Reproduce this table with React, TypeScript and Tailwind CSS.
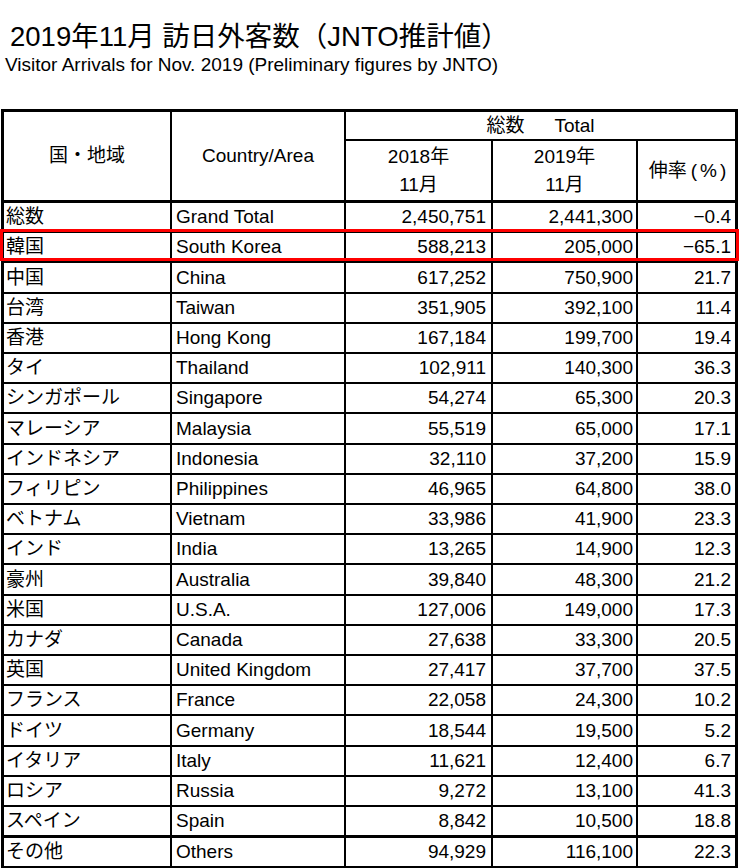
import React from "react";

const rows: [string, string, string, string, string][] = [
  ["総数", "Grand Total", "2,450,751", "2,441,300", "−0.4"],
  ["韓国", "South Korea", "588,213", "205,000", "−65.1"],
  ["中国", "China", "617,252", "750,900", "21.7"],
  ["台湾", "Taiwan", "351,905", "392,100", "11.4"],
  ["香港", "Hong Kong", "167,184", "199,700", "19.4"],
  ["タイ", "Thailand", "102,911", "140,300", "36.3"],
  ["シンガポール", "Singapore", "54,274", "65,300", "20.3"],
  ["マレーシア", "Malaysia", "55,519", "65,000", "17.1"],
  ["インドネシア", "Indonesia", "32,110", "37,200", "15.9"],
  ["フィリピン", "Philippines", "46,965", "64,800", "38.0"],
  ["ベトナム", "Vietnam", "33,986", "41,900", "23.3"],
  ["インド", "India", "13,265", "14,900", "12.3"],
  ["豪州", "Australia", "39,840", "48,300", "21.2"],
  ["米国", "U.S.A.", "127,006", "149,000", "17.3"],
  ["カナダ", "Canada", "27,638", "33,300", "20.5"],
  ["英国", "United Kingdom", "27,417", "37,700", "37.5"],
  ["フランス", "France", "22,058", "24,300", "10.2"],
  ["ドイツ", "Germany", "18,544", "19,500", "5.2"],
  ["イタリア", "Italy", "11,621", "12,400", "6.7"],
  ["ロシア", "Russia", "9,272", "13,100", "41.3"],
  ["スペイン", "Spain", "8,842", "10,500", "18.8"],
  ["その他", "Others", "94,929", "116,100", "22.3"],
];

const font = {
  fontFamily: '"Liberation Sans", "Noto Sans CJK JP", sans-serif',
};

const tallRows = new Set([2, 7, 12, 17]);

export default function App() {
  return (
    <div className="bg-white text-black w-[739px] h-[868px] overflow-hidden" style={font}>
      <div className="pt-[22px] pl-[10px] text-[27.5px] leading-[30px]">
        2019年11月 訪日外客数（JNTO推計値）
      </div>
      <div className="mt-[2px] pl-[5px] text-[19px] leading-[22px]">
        Visitor Arrivals for Nov. 2019 (Preliminary figures by JNTO)
      </div>
      <div className="relative mt-[33px] ml-[1px] w-[737px]">
        <table className="table-fixed border-separate border-spacing-0 w-[737px] border-l-[3px] border-t-[3px] border-black text-[19px] leading-[22px]">
          <colgroup>
            <col className="w-[168px]" />
            <col className="w-[174px]" />
            <col className="w-[147px]" />
            <col className="w-[145px]" />
            <col className="w-[100px]" />
          </colgroup>
          <thead>
            <tr>
              <th rowSpan={2} className="font-normal border-r-2 border-b-[3px] border-black text-center p-0 align-middle">
                国・地域
              </th>
              <th rowSpan={2} className="font-normal border-r-2 border-b-[3px] border-black text-center p-0 align-middle">
                Country/Area
              </th>
              <th colSpan={3} className="h-[29px] font-normal border-r-[3px] border-b-2 border-black text-center p-0 align-middle">
                総数<span className="ml-[30px]">Total</span>
              </th>
            </tr>
            <tr>
              <th className="h-[62px] font-normal border-r-2 border-b-[3px] border-black text-center p-0 align-middle leading-[28px]">
                2018年
                <br />
                11月
              </th>
              <th className="font-normal border-r-2 border-b-[3px] border-black text-center p-0 align-middle leading-[28px]">
                2019年
                <br />
                11月
              </th>
              <th className="font-normal border-r-[3px] border-b-[3px] border-black text-center p-0 pl-[2px] align-middle whitespace-nowrap">
                伸率<span className="ml-[4px]">(</span>
                <span className="mx-[3px]">%</span>)
              </th>
            </tr>
          </thead>
          <tbody>
            {rows.map((r, i) => {
              const thick = i >= rows.length - 2;
              const b = thick ? "border-b-[3px]" : "border-b-2";
              const h = thick ? "h-[31px]" : tallRows.has(i) ? "h-[31px]" : "h-[30px]";
              return (
                <tr key={i}>
                  <td className={`${h} ${b} border-r-2 border-black pl-[2px] p-0 align-middle whitespace-nowrap`}>
                    {r[0]}
                  </td>
                  <td className={`${b} border-r-2 border-black pl-[4px] align-middle whitespace-nowrap`}>
                    {r[1]}
                  </td>
                  <td className={`${b} border-r-2 border-black pr-[5px] text-right align-middle`}>
                    {r[2]}
                  </td>
                  <td className={`${b} border-r-2 border-black pr-[3px] text-right align-middle`}>
                    {r[3]}
                  </td>
                  <td className={`${b} border-r-[3px] border-black pr-[4px] text-right align-middle`}>
                    {r[4]}
                  </td>
                </tr>
              );
            })}
          </tbody>
        </table>
        <div className="absolute left-[-1px] top-[120px] w-[739px] h-[32px] border-[3px] border-[#ff0000] pointer-events-none" />
      </div>
    </div>
  );
}
